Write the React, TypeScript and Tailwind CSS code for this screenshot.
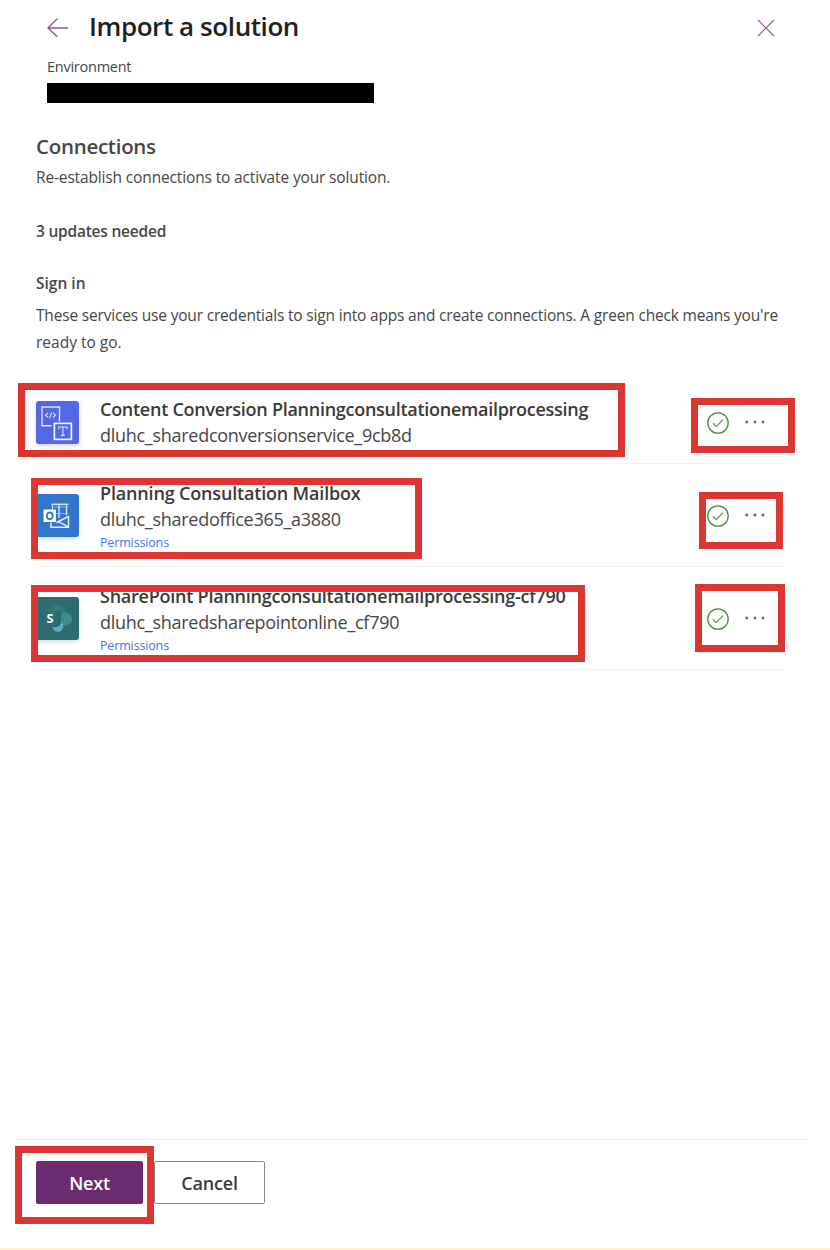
import type { ReactNode } from "react";

type Connection = {
  name: string;
  nameSpacing: string;
  reference: string;
  permissions: boolean;
  tile: string;
  icon: ReactNode;
};

function ConversionIcon() {
  return (
    <svg width="43" height="43" viewBox="0 0 43 43" fill="none">
      <path d="M15.5 24.8H6V6h17.5v14.5" stroke="#dfe3ff" strokeWidth="1.4" />
      <path d="M12 12l-2.5 2.2L12 16.4M17 12l2.5 2.2-2.5 2.2M15.6 11.3l-2 6" stroke="#dfe3ff" strokeWidth="1.1" />
      <rect x="18.4" y="22.4" width="17" height="16" stroke="#fff" strokeWidth="1.6" />
      <path d="M22.8 28.3v-2.3h8.2v2.3M26.9 26v8.4M25 34.4h3.8" stroke="#dfe3ff" strokeWidth="1.1" />
    </svg>
  );
}

function OutlookIcon() {
  return (
    <svg width="43" height="43" viewBox="0 0 43 43" fill="none">
      <path d="M15.5 10.3h17" stroke="#d5e6f7" strokeWidth="1.5" />
      <path d="M18.5 13h13.500M20 19.5h12" stroke="#8fb8e6" strokeWidth="1" />
      <path d="M16.5 10.5v5M23 11v13M30.5 10.5v11" stroke="#d5e6f7" strokeWidth="1.3" />
      <path d="M20.5 28.5l11-5.500M32.5 21.8v11.400H15V28.500M22 27.500l10.500 5.300" stroke="#e8f2fc" strokeWidth="1.4" />
      <rect x="7.5" y="15.5" width="12.5" height="12.5" rx="0.5" fill="#fff" />
      <ellipse cx="13.8" cy="21.7" rx="2.9" ry="3.4" stroke="#3176cd" strokeWidth="1.7" />
    </svg>
  );
}

function SharePointIcon() {
  return (
    <svg width="43" height="43" viewBox="0 0 43 43" fill="none">
      <circle cx="21.5" cy="15" r="7.8" fill="#35787d" />
      <circle cx="29.3" cy="22" r="6.7" fill="#3f8b90" />
      <circle cx="21.8" cy="29.3" r="5.5" fill="#55b0c0" />
      <path d="M14 14.5h9a2 2 0 0 1 2 2v8.500a5 5 0 0 1-5 5h-6z" fill="#2a666b" />
      <rect x="7.2" y="14.8" width="14.5" height="14" rx="1" fill="#2b6f74" />
      <text x="10.6" y="26.2" className="fill-white text-[12.5px] font-bold">S</text>
    </svg>
  );
}

const connections: Connection[] = [
  {
    name: "Content Conversion Planningconsultationemailprocessing",
    nameSpacing: "tracking-[-0.27px]",
    reference: "dluhc_sharedconversionservice_9cb8d",
    permissions: false,
    tile: "bg-[#5468e4]",
    icon: <ConversionIcon />,
  },
  {
    name: "Planning Consultation Mailbox",
    nameSpacing: "tracking-[-0.17px]",
    reference: "dluhc_sharedoffice365_a3880",
    permissions: true,
    tile: "bg-[#3176cd]",
    icon: <OutlookIcon />,
  },
  {
    name: "SharePoint Planningconsultationemailprocessing-cf790",
    nameSpacing: "tracking-[-0.24px]",
    reference: "dluhc_sharedsharepointonline_cf790",
    permissions: true,
    tile: "bg-[#2f6c70]",
    icon: <SharePointIcon />,
  },
];

function ConnectionRow({ connection }: { connection: Connection }) {
  const offset = connection.permissions ? "pt-[2px] -mb-[2px]" : "pt-px -mb-px";
  return (
    <li className="flex items-center border-b border-[#f3f3f3] py-[14px]">
      <div className={`size-[43px] rounded-[3px] shadow-[0_2px_4px_rgba(0,0,0,0.16)] ${connection.tile}`}>
        {connection.icon}
      </div>
      <div className={`ml-[21px] flex-1 ${offset}`}>
        <div className={`h-[27px] text-[18px] leading-[27px] font-semibold text-[#3b3a39] ${connection.nameSpacing}`}>
          {connection.name}
        </div>
        <div className="h-[27px] text-[18px] leading-[24px] tracking-[-0.28px] text-[#484644]">{connection.reference}</div>
        {connection.permissions && (
          <a className="block h-5 text-[12.5px] leading-[17px] tracking-[-0.15px] text-[#4571f5]">Permissions</a>
        )}
      </div>
      <svg width="66" height="24" viewBox="0 0 66 24" fill="none" className="mr-[18px]">
        <circle cx="14" cy="13" r="10.2" stroke="#4b8a44" strokeWidth="1.3" />
        <path d="M9 13.300l3.300 3.300 6.700-7" stroke="#5b9455" strokeWidth="1.3" />
        <path d="M41.500 10.700h2.500v2.500h-2.500zM49.700 10.700h2.500v2.500h-2.500zM57.700 10.700h2.500v2.500h-2.500z" fill="#605e5c" />
      </svg>
    </li>
  );
}

const highlights = [
  "top-[383px] left-[18px] h-[74px] w-[607px]",
  "top-[478px] left-[31px] h-[81px] w-[391px]",
  "top-[585px] left-[31px] h-[77px] w-[554px]",
  "top-[398px] left-[691px] h-[55px] w-[104px]",
  "top-[492px] left-[699px] h-[57px] w-[84px]",
  "top-[584px] left-[695px] h-[68px] w-[90px]",
  "top-[1146px] left-[15px] h-[78px] w-[139px]",
];

export default function App() {
  return (
    <main className="relative flex h-[1250px] w-[830px] flex-col overflow-hidden bg-white font-['Open_Sans',sans-serif]">
      <header className="pt-2 pl-[47px]">
        <div className="flex h-9 items-center">
          <svg width="22" height="22" viewBox="0 0 22 22" fill="none" stroke="#8f5a93" strokeWidth="1.4">
            <path d="M21 13H1M10.500 3.500L1 13l9.500 9" />
          </svg>
          <h1 className="ml-5 flex-1 text-[26px] leading-9 font-semibold tracking-[-0.42px] text-[#201f1e]">
            Import a solution
          </h1>
          <svg width="18" height="18" viewBox="0 0 18 18" stroke="#8f5a93" strokeWidth="1.2" className="mt-1 mr-[55px]">
            <path d="M1 1l16 16M17 1L1 17" />
          </svg>
        </div>
        <div className="mt-[13px] h-5 text-[14.5px] leading-5 tracking-[-0.25px] text-[#484644]">Environment</div>
        <div className="mt-[6px] h-5 w-[327px] bg-black" />
      </header>
      <section className="flex-1 pt-[29px] pr-[42px] pl-9 text-[15.5px] leading-[26px] text-[#484644]">
        <h2 className="h-7 text-[20.5px] leading-7 font-semibold tracking-[-0.28px]">Connections</h2>
        <p className="mt-1 tracking-[-0.145px]">Re-establish connections to activate your solution.</p>
        <p className="mt-7 font-semibold tracking-[-0.22px]">3 updates needed</p>
        <h3 className="mt-[26px] font-semibold">Sign in</h3>
        <p className="mt-[6px] leading-[27px] tracking-[-0.183px] whitespace-nowrap">
          These services use your credentials to sign into apps and create connections. A green check means you're
          <br />
          <span className="tracking-normal">ready to go.</span>
        </p>
        <ul className="mt-[25px]">
          {connections.map((connection) => (
            <ConnectionRow key={connection.reference} connection={connection} />
          ))}
        </ul>
      </section>
      <footer className="ml-[15px] flex h-[109px] w-[793px] border-t border-[#ececec] pt-[21px] pl-[21px] text-[18px] font-semibold">
        <button className="h-[43px] w-[107px] rounded-[2px] bg-[#6b2c6f] pt-px tracking-[-0.2px] text-white">Next</button>
        <button className="ml-[11px] h-[43px] w-[111px] rounded-[2px] border border-[#8a8886] pt-px tracking-[-0.2px] text-[#3b3a39]">
          Cancel
        </button>
      </footer>
      <div className="h-[2px] bg-[#fdf0d0]" />
      {highlights.map((box) => (
        <div key={box} className={`pointer-events-none absolute border-[7px] border-[#da3732] ${box}`} />
      ))}
    </main>
  );
}
